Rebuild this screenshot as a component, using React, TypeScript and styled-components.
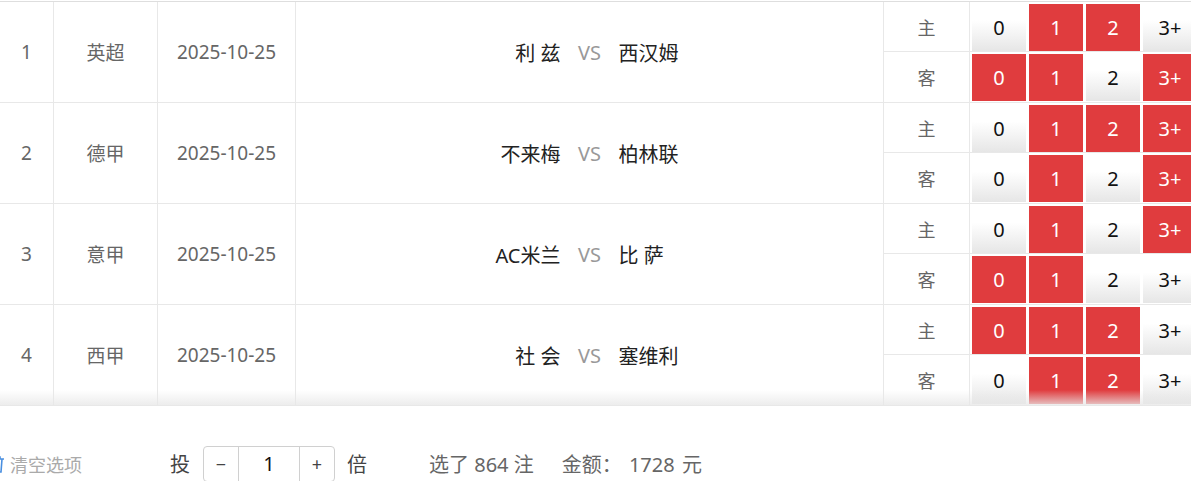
import React from "react";
import styled, { createGlobalStyle } from "styled-components";

const GlobalStyle = createGlobalStyle`
  html, body { margin: 0; padding: 0; background: #fff; }
  body {
    font-family: "Noto Sans", "Noto Sans CJK SC", sans-serif;
    overflow: hidden;
  }
`;

const Page = styled.div`
  width: 1191px;
  overflow: hidden;
`;

const Table = styled.div`
  position: relative;
  margin-top: 1px;
  border-top: 1px solid #dedede;
  width: 1200px;
`;

const Fade = styled.div`
  position: absolute;
  left: 0;
  right: 0;
  bottom: 0;
  height: 16px;
  pointer-events: none;
  background: linear-gradient(to bottom, rgba(255, 255, 255, 0), rgba(232, 232, 232, 0.85));
`;

const MatchRow = styled.div`
  display: grid;
  grid-template-columns: 54px 104px 138px 588px 1fr;
  height: 101px;
  border-bottom: 1px solid #e8e8e8;
  box-sizing: border-box;
`;

const Cell = styled.div`
  display: flex;
  align-items: center;
  justify-content: center;
  border-right: 1px solid #e8e8e8;
  font-size: 19px;
  color: #666;
`;

const MatchCell = styled.div`
  display: grid;
  grid-template-columns: 1fr 58px 1fr;
  align-items: center;
  border-right: 1px solid #e8e8e8;
  font-size: 20px;
  color: #222;
`;

const Home = styled.span`
  text-align: right;
  white-space: pre;
`;

const Vs = styled.span`
  text-align: center;
  color: #999;
`;

const Away = styled.span`
  text-align: left;
  white-space: pre;
`;

const OddsBlock = styled.div`
  display: flex;
  flex-direction: column;
`;

const SubRow = styled.div<{ $last?: boolean }>`
  display: grid;
  grid-template-columns: 85px repeat(4, 54px);
  column-gap: 3px;
  height: 50px;
  box-sizing: border-box;
  border-bottom: ${(p) => (p.$last ? "none" : "1px solid #e8e8e8")};
`;

const SideLabel = styled.div`
  display: flex;
  align-items: center;
  justify-content: center;
  border-right: 1px solid #e8e8e8;
  font-size: 18px;
  color: #666;
  margin-right: -1px;
`;

const OddBtn = styled.div<{ $on: boolean }>`
  display: flex;
  align-items: center;
  justify-content: center;
  margin: 2px 0 0;
  height: 47px;
  font-size: 20px;
  color: ${(p) => (p.$on ? "#fff" : "#111")};
  background: ${(p) =>
    p.$on ? "#e03c3e" : "linear-gradient(to bottom, #ffffff 35%, #e6e6e6 100%)"};
`;

const Footer = styled.div`
  display: flex;
  align-items: center;
  padding-top: 40px;
  height: 75px;
  box-sizing: border-box;
  font-size: 20px;
  color: #555;
`;

const ClearBtn = styled.div`
  display: flex;
  align-items: center;
  gap: 5px;
  margin-left: -12px;
  font-size: 18px;
  color: #aaa;
  width: 182px;
`;

const Label = styled.span`
  color: #444;
`;

const Stepper = styled.div`
  display: flex;
  height: 36px;
  margin: 0 12px 0 13px;
  border: 1px solid #d0d0d0;
  border-radius: 4px;
  box-sizing: border-box;
`;

const StepBtn = styled.div`
  width: 34px;
  display: flex;
  align-items: center;
  justify-content: center;
  font-size: 18px;
  color: #444;
`;

const StepValue = styled.div`
  width: 60px;
  display: flex;
  align-items: center;
  justify-content: center;
  border-left: 1px solid #d0d0d0;
  border-right: 1px solid #d0d0d0;
  font-size: 20px;
  color: #111;
`;

const Summary = styled.div`
  display: flex;
  gap: 28px;
  margin-left: 62px;
  color: #666;
`;

const Amount = styled.span`
  word-spacing: 2px;
`;

type Match = {
  no: number;
  league: string;
  date: string;
  home: string;
  away: string;
  homeSel: boolean[];
  awaySel: boolean[];
};

const matches: Match[] = [
  { no: 1, league: "英超", date: "2025-10-25", home: "利 兹", away: "西汉姆", homeSel: [false, true, true, false], awaySel: [true, true, false, true] },
  { no: 2, league: "德甲", date: "2025-10-25", home: "不来梅", away: "柏林联", homeSel: [false, true, true, true], awaySel: [false, true, false, true] },
  { no: 3, league: "意甲", date: "2025-10-25", home: "AC米兰", away: "比 萨", homeSel: [false, true, false, true], awaySel: [true, true, false, false] },
  { no: 4, league: "西甲", date: "2025-10-25", home: "社 会", away: "塞维利", homeSel: [true, true, true, false], awaySel: [false, true, true, false] },
];

const goals = ["0", "1", "2", "3+"];

const TrashIcon = () => (
  <svg width="17" height="18" viewBox="0 0 17 18" fill="none" stroke="#4a8fe0" strokeWidth="1.6">
    <path d="M1 4h15M5 4V2h7v2M3 4l1 13h9l1-13" />
  </svg>
);

export default function App() {
  return (
    <Page>
      <GlobalStyle />
      <Table>
        {matches.map((m) => (
          <MatchRow key={m.no}>
            <Cell>{m.no}</Cell>
            <Cell>{m.league}</Cell>
            <Cell>{m.date}</Cell>
            <MatchCell>
              <Home>{m.home}</Home>
              <Vs>VS</Vs>
              <Away>{m.away}</Away>
            </MatchCell>
            <OddsBlock>
              <SubRow>
                <SideLabel>主</SideLabel>
                {goals.map((g, i) => (
                  <OddBtn key={g} $on={m.homeSel[i]}>{g}</OddBtn>
                ))}
              </SubRow>
              <SubRow $last>
                <SideLabel>客</SideLabel>
                {goals.map((g, i) => (
                  <OddBtn key={g} $on={m.awaySel[i]}>{g}</OddBtn>
                ))}
              </SubRow>
            </OddsBlock>
          </MatchRow>
        ))}
        <Fade />
      </Table>
      <Footer>
        <ClearBtn>
          <TrashIcon />
          清空选项
        </ClearBtn>
        <Label>投</Label>
        <Stepper>
          <StepBtn>−</StepBtn>
          <StepValue>1</StepValue>
          <StepBtn>+</StepBtn>
        </Stepper>
        <Label>倍</Label>
        <Summary>
          <span>选了 864 注</span>
          <Amount>金额：&nbsp;1728 元</Amount>
        </Summary>
      </Footer>
    </Page>
  );
}
